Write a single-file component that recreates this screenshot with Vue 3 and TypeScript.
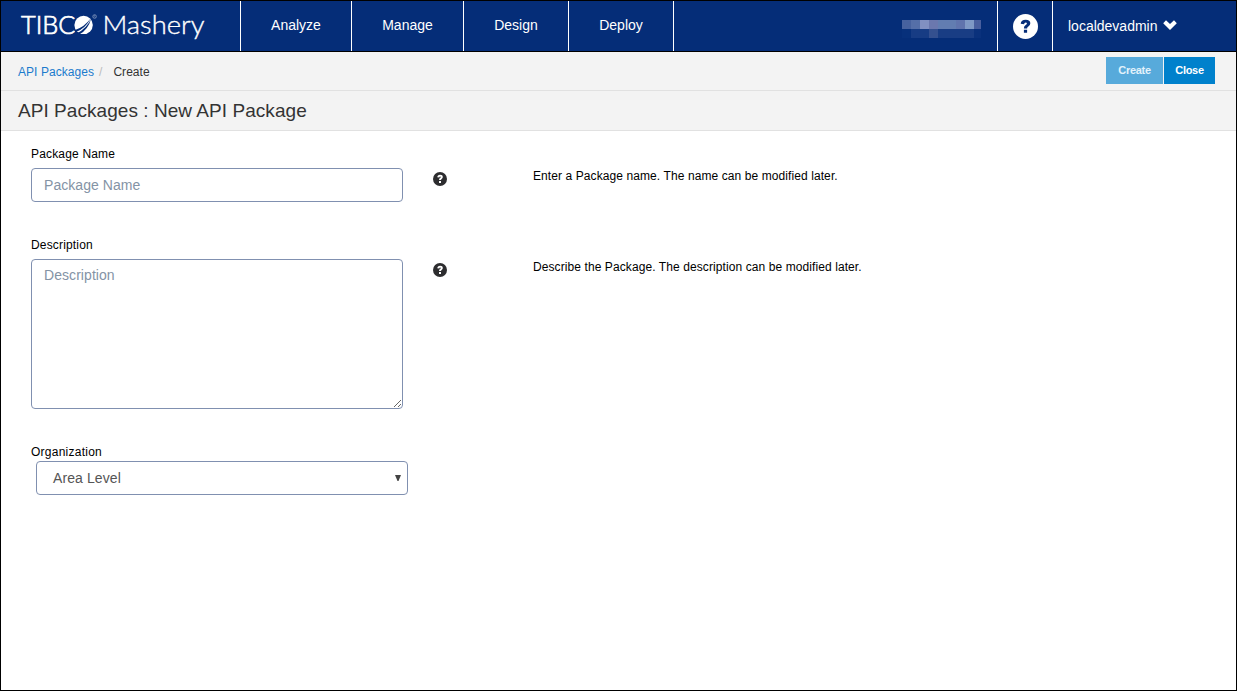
<script setup lang="ts">
import { ref } from 'vue'

interface Cell { x: number; y: number; w: number; h: number; fill: string }

const navItems = [
  { label: 'Analyze', width: 111 },
  { label: 'Manage', width: 112 },
  { label: 'Design', width: 105 },
  { label: 'Deploy', width: 105 },
]

const redacted: Cell[] = [
  { x: 0, y: 1, w: 9, h: 9, fill: '#47629f' },
  { x: 9, y: 1, w: 9, h: 9, fill: '#556fa8' },
  { x: 18, y: 1, w: 9, h: 9, fill: '#8190c1' },
  { x: 27, y: 1, w: 9, h: 9, fill: '#6b78ae' },
  { x: 36, y: 1, w: 18, h: 9, fill: '#627db1' },
  { x: 54, y: 1, w: 9, h: 9, fill: '#6074ad' },
  { x: 63, y: 1, w: 9, h: 9, fill: '#7f99c5' },
  { x: 72, y: 1, w: 7, h: 9, fill: '#495f9e' },
  { x: 0, y: 10, w: 9, h: 9, fill: '#07307b' },
  { x: 9, y: 10, w: 18, h: 9, fill: '#173c84' },
  { x: 27, y: 10, w: 9, h: 9, fill: '#34508f' },
  { x: 36, y: 10, w: 36, h: 9, fill: '#193d84' },
  { x: 72, y: 10, w: 7, h: 9, fill: '#0a317c' },
]

const packageName = ref('')
const description = ref('')
const organization = ref('Area Level')
</script>

<template>
  <div class="window">
    <header class="topbar">
      <div class="brand">
        <svg width="239" height="50" viewBox="1 1 239 50" aria-label="TIBCO Mashery">
          <g class="logo-text">
            <text class="tibc" x="21" y="33.5" textLength="54.5" lengthAdjust="spacingAndGlyphs">TIBC</text>
            <text x="102.5" y="33.5" textLength="102" lengthAdjust="spacingAndGlyphs">Mashery</text>
          </g>
          <circle cx="83.6" cy="24.9" r="9.2" fill="#fff" />
          <g fill="#052d78">
            <path d="M74.5 30.2Q84.5 27 90.8 18.2Q85.5 28.5 75.4 32.3Z" />
            <path d="M77 33.3Q86.5 28.6 91.2 18.8Q88 30 79.2 34.5Z" />
          </g>
          <circle cx="94.6" cy="16.5" r="1.8" fill="none" stroke="#8fa2c6" stroke-width=".7" />
          <path d="M94.1 17.5v-2h.8v1l.4 1" fill="none" stroke="#8fa2c6" stroke-width=".4" />
        </svg>
      </div>
      <nav class="nav">
        <a v-for="item in navItems" :key="item.label" class="nav-item" :style="{ width: item.width + 'px' }">{{ item.label }}</a>
      </nav>
      <div class="account">
        <svg width="79" height="19" viewBox="0 0 79 19" shape-rendering="crispEdges">
          <rect v-for="(c, i) in redacted" :key="i" :x="c.x" :y="c.y" :width="c.w" :height="c.h" :fill="c.fill" />
        </svg>
      </div>
      <div class="help">
        <svg width="25" height="25" viewBox="0 0 14 14">
          <circle cx="7" cy="7" r="7" fill="#fff" />
          <path d="M4.3 5.5Q4.5 3.2 7.1 3.2Q9.7 3.2 9.7 5.2Q9.7 6.4 8.6 7Q7.9 7.4 7.9 8.1H6.1Q6 6.7 7.1 6.1Q7.8 5.7 7.8 5.3Q7.8 4.8 7.1 4.8Q6.3 4.8 6.2 5.7ZM6.1 8.8H7.9V10.5H6.1Z" fill="#052d78" />
        </svg>
      </div>
      <div class="user">
        <span>localdevadmin</span>
        <svg width="14" height="10" viewBox="0 0 14 10"><path d="M.2 3.2L3 .2L7 4L11 .2L13.8 3.2L7 9.9Z" fill="#fff" /></svg>
      </div>
    </header>

    <div class="crumbbar">
      <div class="crumbs">
        <a class="crumb-link">API Packages</a><span class="slash">/</span><span class="current">Create</span>
      </div>
      <div class="actions">
        <button class="btn create" disabled>Create</button>
        <button class="btn close">Close</button>
      </div>
    </div>
    <h1 class="title">API Packages : New API Package</h1>

    <main class="form">
      <div class="row name-row">
        <div class="field">
          <label class="label">Package Name</label>
          <input v-model="packageName" class="control" placeholder="Package Name" />
        </div>
        <svg class="hint-icon" width="14" height="14" viewBox="0 0 14 14">
          <circle cx="7" cy="7" r="7" fill="#2d2d2f" />
          <path d="M4.3 5.3Q4.4 2.8 7.1 2.8Q9.8 2.8 9.8 5Q9.8 6.3 8.7 6.9Q8 7.3 8 8.1H6Q5.9 6.5 7.1 5.9Q7.8 5.5 7.8 5Q7.8 4.4 7.1 4.4Q6.4 4.4 6.3 5.5ZM6 9H8V11H6Z" fill="#fff" />
        </svg>
        <p class="hint">Enter a Package name. The name can be modified later.</p>
      </div>

      <div class="row desc-row">
        <div class="field">
          <label class="label">Description</label>
          <textarea v-model="description" class="control area" placeholder="Description"></textarea>
        </div>
        <svg class="hint-icon" width="14" height="14" viewBox="0 0 14 14">
          <circle cx="7" cy="7" r="7" fill="#2d2d2f" />
          <path d="M4.3 5.3Q4.4 2.8 7.1 2.8Q9.8 2.8 9.8 5Q9.8 6.3 8.7 6.9Q8 7.3 8 8.1H6Q5.9 6.5 7.1 5.9Q7.8 5.5 7.8 5Q7.8 4.4 7.1 4.4Q6.4 4.4 6.3 5.5ZM6 9H8V11H6Z" fill="#fff" />
        </svg>
        <p class="hint">Describe the Package. The description can be modified later.</p>
      </div>

      <div class="field">
        <label class="label org-label">Organization</label>
        <div class="control select">
          <span>{{ organization }}</span>
          <svg width="6" height="6" viewBox="0 0 6 6"><path d="M0 0H6L3.5 6H2.5Z" fill="#444" /></svg>
        </div>
      </div>
    </main>
  </div>
</template>

<style>
body { margin: 0; background: #fff; }
</style>

<style scoped>
* { box-sizing: border-box; }
.window {
  width: 1237px;
  height: 691px;
  border: 1px solid #000;
  background: #fff;
  font-family: "Liberation Sans", Arial, sans-serif;
  font-size: 12px;
  color: #000;
  overflow: hidden;
}
.topbar {
  display: flex;
  height: 51px;
  background: #052d78;
  border-bottom: 1px solid #000;
  color: #fff;
  font-size: 14px;
}
.brand { width: 239px; }
.brand svg { display: block; }
.logo-text {
  fill: #fff;
  stroke: #fff;
  stroke-width: 0.35px;
  font-family: Lato, sans-serif;
  font-size: 24.5px;
  font-weight: 300;
}
.tibc { stroke-width: 0.7px; }
.nav { display: flex; border-right: 1px solid #fff; }
.nav-item {
  display: flex;
  flex: none;
  justify-content: center;
  align-items: center;
  padding-bottom: 2px;
  border-left: 1px solid #fff;
}
.account { flex: 1; display: flex; justify-content: flex-end; padding: 18px 16px 0 0; }
.help {
  width: 56px;
  border-left: 1px solid #fff;
  border-right: 1px solid #fff;
  display: flex;
  align-items: center;
  justify-content: center;
  padding-top: 1px;
}
.user { width: 183px; display: flex; align-items: center; gap: 5px; padding-left: 15px; }
.user svg { margin-bottom: 2px; }
.crumbbar {
  height: 39px;
  display: flex;
  justify-content: space-between;
  align-items: flex-start;
  background: #f3f3f3;
  border-bottom: 1px solid #e1e1e1;
  padding: 5px 21px 0 17px;
}
.crumbs { display: flex; line-height: 14px; padding-top: 8px; letter-spacing: 0.05px; }
.crumb-link { color: #1b7bcd; }
.slash { color: #bbb; margin: 0 11px 0 5px; }
.current { color: #333; }
.actions { display: flex; gap: 1px; }
.btn {
  height: 27px;
  border: 0;
  padding: 0 0 2px;
  color: #fff;
  font: bold 11px "Liberation Sans", Arial, sans-serif;
  letter-spacing: -0.3px;
}
.create { width: 57px; background: #57aadb; color: #e3f2fb; }
.close { width: 51px; background: #0081cc; }
.title {
  margin: 0;
  height: 40px;
  padding-left: 17px;
  background: #f3f3f3;
  border-bottom: 1px solid #e1e1e1;
  font-size: 19px;
  font-weight: 400;
  line-height: 39px;
  letter-spacing: 0.05px;
  color: #333;
}
.form { padding: 16px 0 0 30px; }
.row { display: flex; }
.name-row { height: 91px; }
.desc-row { height: 207px; }
.field { width: 377px; }
.row .field { width: 372px; }
.label { display: block; line-height: 14px; margin-bottom: 7px; letter-spacing: 0.17px; }
.org-label { margin-bottom: 2px; letter-spacing: 0.25px; }
.control {
  display: block;
  width: 372px;
  height: 34px;
  border: 1px solid #8090b0;
  border-radius: 4px;
  background: #fff;
  padding: 0 12px;
  font: 14px "Liberation Sans", Arial, sans-serif;
  letter-spacing: 0.06px;
  color: #555;
  outline: none;
}
.control::placeholder { color: #8493a5; opacity: 1; }
.area { height: 150px; padding-top: 7px; resize: vertical; }
.select {
  display: flex;
  align-items: center;
  justify-content: space-between;
  margin-left: 5px;
  padding: 0 6px 0 16px;
  letter-spacing: 0.1px;
}
.hint-icon { margin: 25px 0 0 30px; flex: none; }
.hint { margin: 22px 0 0 86px; line-height: 14px; letter-spacing: 0.09px; }
</style>
